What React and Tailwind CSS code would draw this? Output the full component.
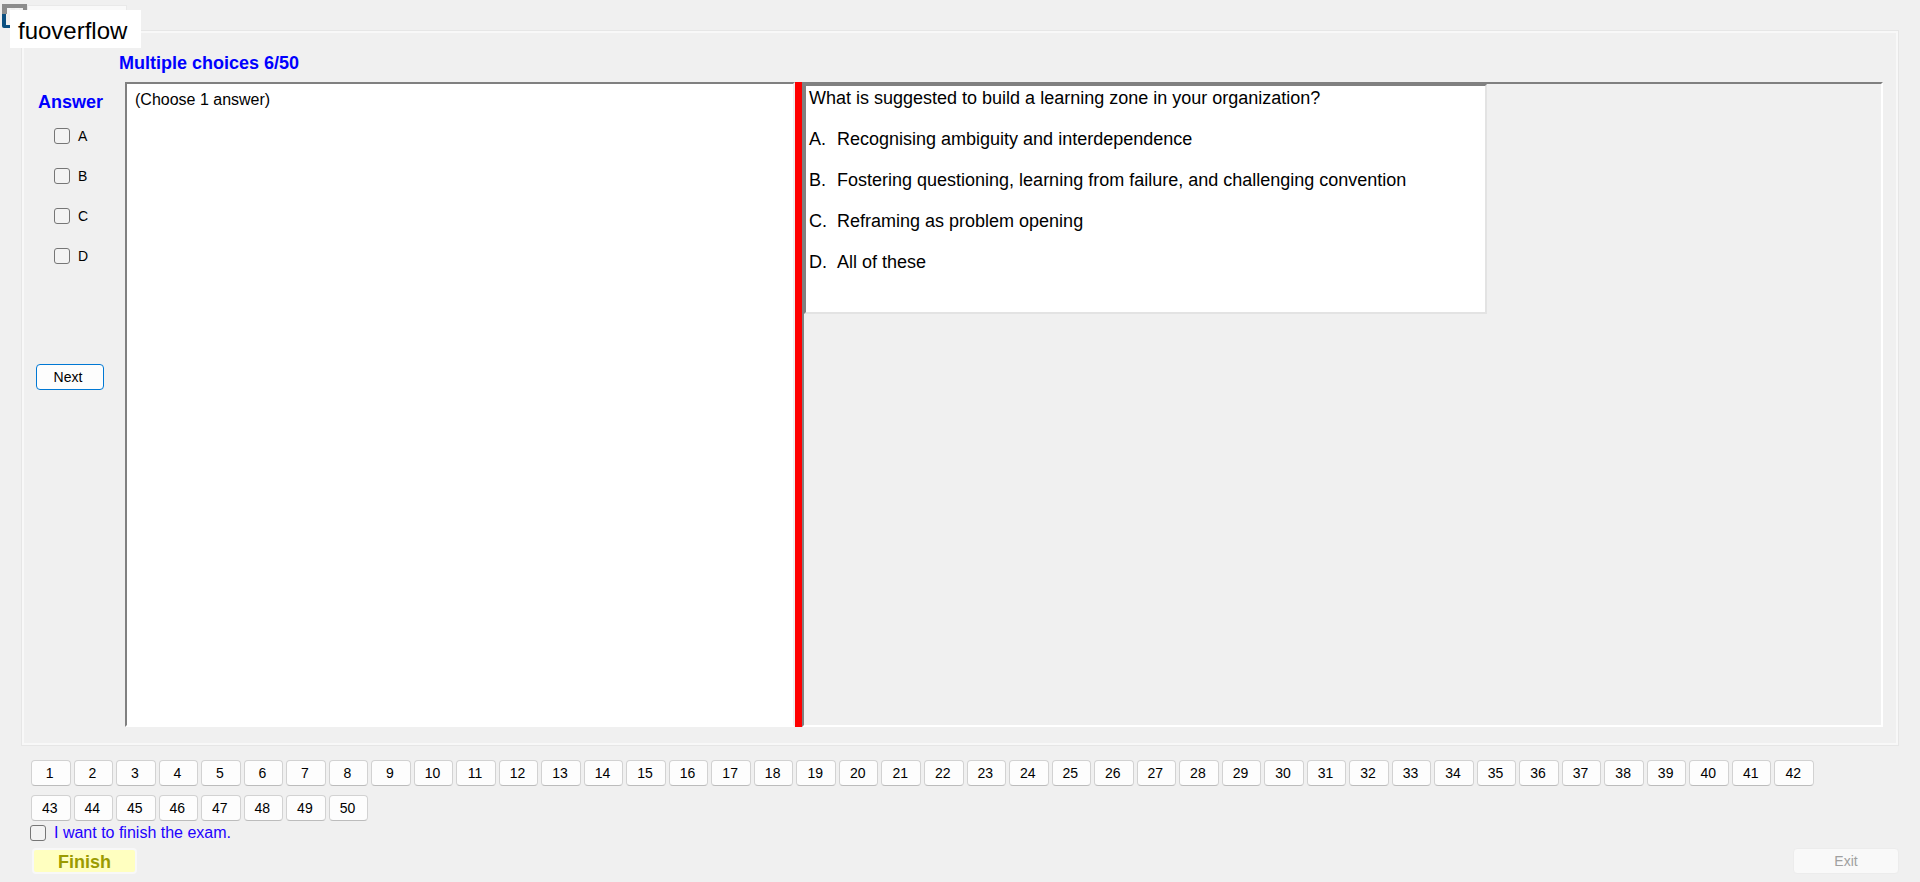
import React, { useState } from 'react';

const choices = ['A', 'B', 'C', 'D'];

const question = {
    title: 'What is suggested to build a learning zone in your organization?',
    options: [
        'Recognising ambiguity and interdependence',
        'Fostering questioning, learning from failure, and challenging convention',
        'Reframing as problem opening',
        'All of these',
    ],
};

const questionNumbers = Array.from({ length: 50 }, (_, i) => i + 1);

const checkboxClass =
    'size-4 shrink-0 appearance-none rounded-[3px] border border-[#767676] bg-[#f3f3f3] checked:bg-[#0067c0]';

const AppIcon = () => (
    <svg className="absolute left-0.5 top-1" width="26" height="24" viewBox="0 0 26 24" aria-hidden="true">
        <path d="M0 0H25V10H21V4H17V8H13V4H9V8H5V10H0Z" fill="#8c8c8c" />
        <path d="M5 4H9V10H5ZM13 4H17V10H13Z" fill="#f4f4f4" />
        <path d="M0 10H4V21H10V24H2Q0 24 0 22Z" fill="#0b4f80" />
    </svg>
);

const AnswerPanel = () => {
    const [selected, setSelected] = useState([]);

    const toggle = (choice) => {
        setSelected((prev) => (prev.includes(choice) ? prev.filter((c) => c !== choice) : [...prev, choice]));
    };

    return (
        <div className="flex w-[103px] shrink-0 flex-col pl-3.5">
            <h2 className="mt-2 pl-0.5 text-[18px] font-bold leading-6 text-[#0000ff]">Answer</h2>
            <div className="mt-2.5 flex flex-col gap-4 pl-[18px]">
                {choices.map((choice) => (
                    <label key={choice} className="flex h-6 items-center gap-2">
                        <input
                            type="checkbox"
                            className={checkboxClass}
                            checked={selected.includes(choice)}
                            onChange={() => toggle(choice)}
                        />
                        {choice}
                    </label>
                ))}
            </div>
            <button className="mt-24 h-[26px] w-[68px] rounded border border-[#0078d4] bg-[#fdfdfd] pr-1 text-sm">
                Next
            </button>
        </div>
    );
};

const App = () => {
    const [wantFinish, setWantFinish] = useState(false);

    return (
        <div className="relative flex min-h-screen flex-col bg-[#f0f0f0] pb-2 pl-[21px] pr-[21px] pt-[30px] font-['Liberation_Sans',Arial,sans-serif] text-sm text-black">
            {/* Window icon and tab strip */}
            <AppIcon />
            <div className="absolute left-[27px] top-[5px] h-6 w-[100px] border border-[#e9e9e9] bg-[#f9f9f9]" />
            <div className="absolute left-2.5 top-2.5 flex h-[38px] w-[131px] items-center bg-white pl-2 pt-1 text-2xl">
                fuoverflow
            </div>

            {/* Question */}
            <main className="flex grow flex-col border border-[#e6e6e6] pb-[18px] pr-[15px] outline-2 -outline-offset-3 outline-[#f8f8f8]">
                <h1 className="mt-5 h-[31px] pl-[97px] text-[18px] font-bold leading-6 text-[#0000ff]">
                    Multiple choices 6/50
                </h1>
                <div className="flex grow">
                    <AnswerPanel />
                    <div className="flex grow">
                        <section className="w-[670px] shrink-0 border-2 border-b-white border-l-[#808080] border-r-[#f0f0f0] border-t-[#808080] bg-white px-2 py-1 text-base">
                            (Choose 1 answer)
                        </section>
                        <div className="w-[7px] shrink-0 bg-[#ff0000]" />
                        <section className="grow border-2 border-b-white border-l-[#808080] border-r-white border-t-[#808080]">
                            <div className="h-[230px] w-[683px] border-2 border-b-[#e3e3e3] border-l-[#808080] border-r-[#e3e3e3] border-t-[#808080] bg-white pl-[3px] pt-0.5 text-[18px] leading-[21px]">
                                <p>{question.title}</p>
                                <ol className="mt-5 flex flex-col gap-5">
                                    {question.options.map((option, i) => (
                                        <li key={option} className="flex">
                                            <span className="w-7">{choices[i]}.</span>
                                            {option}
                                        </li>
                                    ))}
                                </ol>
                            </div>
                        </section>
                    </div>
                </div>
            </main>

            {/* Question list */}
            <nav className="mt-3.5 grid grid-cols-[repeat(42,minmax(0,1fr))] gap-x-[3px] gap-y-[9px] pl-2.5 pr-[85px]">
                {questionNumbers.map((n) => (
                    <button
                        key={n}
                        className="h-[26px] rounded border border-b-[#bcbcbc] border-[#d2d2d2] bg-[#fdfdfd] pr-0.5 text-sm"
                    >
                        {n}
                    </button>
                ))}
            </nav>

            {/* Footer */}
            <label className="mt-0.5 flex h-5 items-center gap-2 self-start pl-[9px] text-base text-[#2200ff]">
                <input
                    type="checkbox"
                    className={checkboxClass}
                    checked={wantFinish}
                    onChange={(e) => setWantFinish(e.target.checked)}
                />
                I want to finish the exam.
            </label>
            <footer className="mt-[5px] flex justify-between pl-[11px]">
                <button className="h-[26px] w-[105px] rounded border-2 border-[#f8f8f8] bg-[#ffffc0] text-[18px] font-bold leading-6 text-[#9b9b00]">
                    Finish
                </button>
                <button disabled className="h-[26px] w-[106px] rounded border border-[#ececec] bg-[#f9f9f9] text-sm text-[#a0a0a0]">
                    Exit
                </button>
            </footer>
        </div>
    );
};

export default App;
